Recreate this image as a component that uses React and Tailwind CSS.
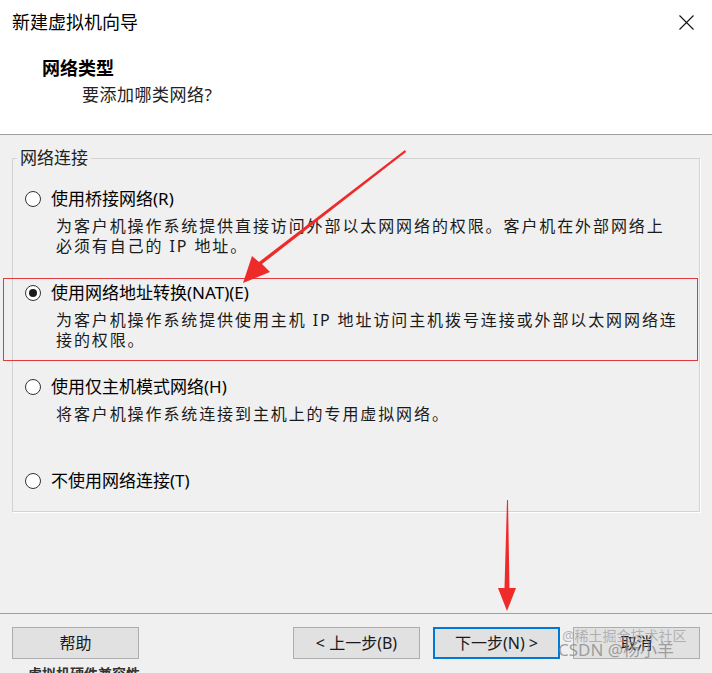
import React from "react";

const options = [
  {
    label: "使用桥接网络(R)",
    lines: ["为客户机操作系统提供直接访问外部以太网网络的权限。客户机在外部网络上", "必须有自己的 IP 地址。"],
    checked: false,
  },
  {
    label: "使用网络地址转换(NAT)(E)",
    lines: ["为客户机操作系统提供使用主机 IP 地址访问主机拨号连接或外部以太网网络连", "接的权限。"],
    checked: true,
  },
  {
    label: "使用仅主机模式网络(H)",
    lines: ["将客户机操作系统连接到主机上的专用虚拟网络。"],
    checked: false,
  },
  {
    label: "不使用网络连接(T)",
    lines: [],
    checked: false,
  },
];

function Radio({ checked }) {
  return (
    <span className="w-[16px] h-[16px] rounded-full border border-[#333] bg-white flex items-center justify-center shrink-0">
      {checked && <span className="w-[8px] h-[8px] rounded-full bg-[#1a1a1a]" />}
    </span>
  );
}

function Btn({ children, primary }) {
  return (
    <button
      className={
        "w-[127px] h-[32px] bg-[#e1e1e1] text-[16px] text-[#1a1a1a] flex items-center justify-center " +
        (primary ? "border-2 border-[#0078d7]" : "border border-[#adadad]")
      }
    >
      {children}
    </button>
  );
}

export default function App() {
  return (
    <div className="relative w-[712px] h-[673px] overflow-hidden bg-[#f0f0f0] font-['Noto_Sans','Noto_Sans_CJK_SC',sans-serif] text-black">
      {/* header */}
      <div className="h-[135px] bg-white border-b border-[#a0a0a0]">
        <div className="flex items-center justify-between pl-[12px] pr-[18px] pt-[9px] h-[35px]">
          <span className="text-[18px] leading-[26px]">新建虚拟机向导</span>
          <svg width="15" height="15" viewBox="0 0 15 15" className="mt-[1px]">
            <path d="M0.5 0.5 L14.5 14.5 M14.5 0.5 L0.5 14.5" stroke="#111" strokeWidth="1.1" fill="none" />
          </svg>
        </div>
        <div className="pl-[42px] pt-[21px] text-[18px] leading-[24px] font-bold">网络类型</div>
        <div className="pl-[82px] pt-[3px] text-[17px] leading-[24px] tracking-[0.5px] text-[#222]">要添加哪类网络?</div>
      </div>

      {/* body */}
      <div className="h-[478px] px-[12px] pt-[11px]">
        <fieldset className="h-[366px] border border-[#d3d3d3] shadow-[1px_1px_0_#fff] pl-[12px]">
          <legend className="ml-[-8px] px-[3px] text-[17px] leading-[24px] text-[#222]">网络连接</legend>
          <div className="flex flex-col pt-[17px]">
            {options.map((o, i) => (
              <div key={i} className={i === 0 ? "" : i === 3 ? "mt-[45px]" : "mt-[25px]"}>
                <div className="flex items-center gap-[10px] h-[24px]">
                  <Radio checked={o.checked} />
                  <span className="text-[17px] leading-[24px]">{o.label}</span>
                </div>
                {o.lines.length > 0 && (
                  <div className="pl-[31px] mt-[5px] text-[16px] leading-[20px] tracking-[1.9px] text-[#1a1a1a]">
                    {o.lines.map((l, j) => (
                      <div key={j}>{l}</div>
                    ))}
                  </div>
                )}
              </div>
            ))}
          </div>
        </fieldset>
      </div>

      {/* footer */}
      <div className="border-t border-[#a0a0a0] px-[12px] pt-[13px] flex">
        <Btn>帮助</Btn>
        <div className="ml-auto flex gap-[13px]">
          <Btn>&lt; 上一步(B)</Btn>
          <Btn primary>下一步(N) &gt;</Btn>
          <Btn>取消</Btn>
        </div>
      </div>
      <div className="pl-[28px] pt-[6px] text-[14px] leading-[18px] font-bold text-[#333]">虚拟机硬件兼容性</div>

      {/* annotations */}
      <div className="absolute left-[3px] top-[278px] w-[695px] h-[83px] border border-[#e0393e]" />
      <svg className="absolute left-0 top-0 pointer-events-none" width="712" height="673">
        <polygon points="405,150 406,152 262,264 270,272 243,283 252,256 259,262" fill="#ee2a2a" />
        <polygon points="507,500 508,500 509.5,588 516,588 507,611 498,588 504.5,588" fill="#ee2a2a" />
      </svg>
      <div className="absolute left-[562px] top-[628px] text-[14px] leading-[16px] text-[#9a9a9a]/70">@稀土掘金技术社区</div>
      <div className="absolute left-[558px] top-[640px] text-[17px] leading-[20px] text-[#8a8a8a]/80">CSDN @杨小羊</div>
    </div>
  );
}
